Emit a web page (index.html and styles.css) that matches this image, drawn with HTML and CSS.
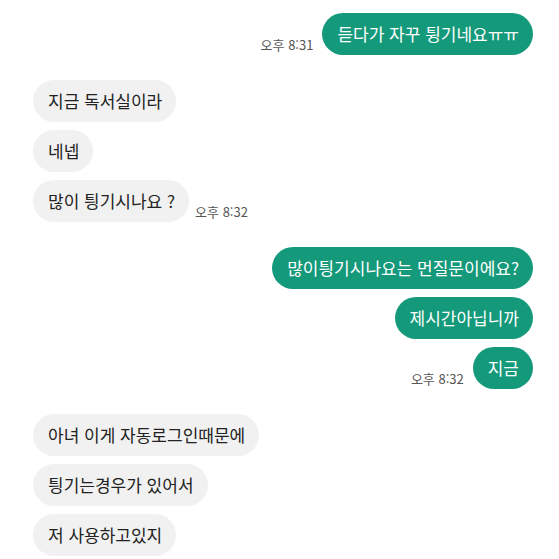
FILE: index.html
```html
<!DOCTYPE html>
<html lang="ko">

<head>
  <meta charset="UTF-8">
  <meta name="viewport" content="width=device-width, initial-scale=1.0">
  <title>채팅</title>
  <link rel="stylesheet" href="styles.css">
</head>

<body>
  <div class="chat">
    <!-- 내 메시지 -->
    <div class="group mine">
      <div class="row">
        <span class="time">오후 8:31</span>
        <div class="bubble">듣다가 자꾸 튕기네요ㅠㅠ</div>
      </div>
    </div>

    <!-- 상대 메시지 -->
    <div class="group theirs">
      <div class="row">
        <div class="bubble">지금 독서실이라</div>
      </div>
      <div class="row">
        <div class="bubble">네넵</div>
      </div>
      <div class="row">
        <div class="bubble">많이 틩기시나요 ?</div>
        <span class="time">오후 8:32</span>
      </div>
    </div>

    <div class="group mine">
      <div class="row">
        <div class="bubble">많이틩기시나요는 먼질문이에요?</div>
      </div>
      <div class="row">
        <div class="bubble">제시간아닙니까</div>
      </div>
      <div class="row">
        <span class="time">오후 8:32</span>
        <div class="bubble">지금</div>
      </div>
    </div>

    <div class="group theirs">
      <div class="row">
        <div class="bubble">아녀 이게 자동로그인때문에</div>
      </div>
      <div class="row">
        <div class="bubble">틩기는경우가 있어서</div>
      </div>
      <div class="row">
        <div class="bubble">저 사용하고있지</div>
      </div>
    </div>
  </div>
</body>

</html>
```

FILE: styles.css
```css
body {
  margin: 0;
  background-color: #fff;
  font-family: "Noto Sans CJK KR", "Noto Sans", sans-serif;
}

.chat {
  display: flex;
  flex-direction: column;
  gap: 25px;
  padding: 13px 26px 0 33px;
}

.group {
  display: flex;
  flex-direction: column;
  gap: 8px;
}

.row {
  display: flex;
  align-items: flex-end;
}

.mine .row {
  justify-content: flex-end;
}

.bubble {
  height: 42px;
  line-height: 41px;
  padding: 0 14px 0 15px;
  border-radius: 21px;
  font-size: 17px;
  white-space: nowrap;
}

.mine .bubble {
  background-color: #14997a;
  color: #fff;
}

.theirs .bubble {
  background-color: #f1f1f1;
  color: #222;
}

.time {
  font-size: 13px;
  color: #555;
  line-height: 14px;
  margin-bottom: 3px;
}

.mine .time {
  margin-right: 9px;
}

.theirs .time {
  margin-left: 6px;
}
```
